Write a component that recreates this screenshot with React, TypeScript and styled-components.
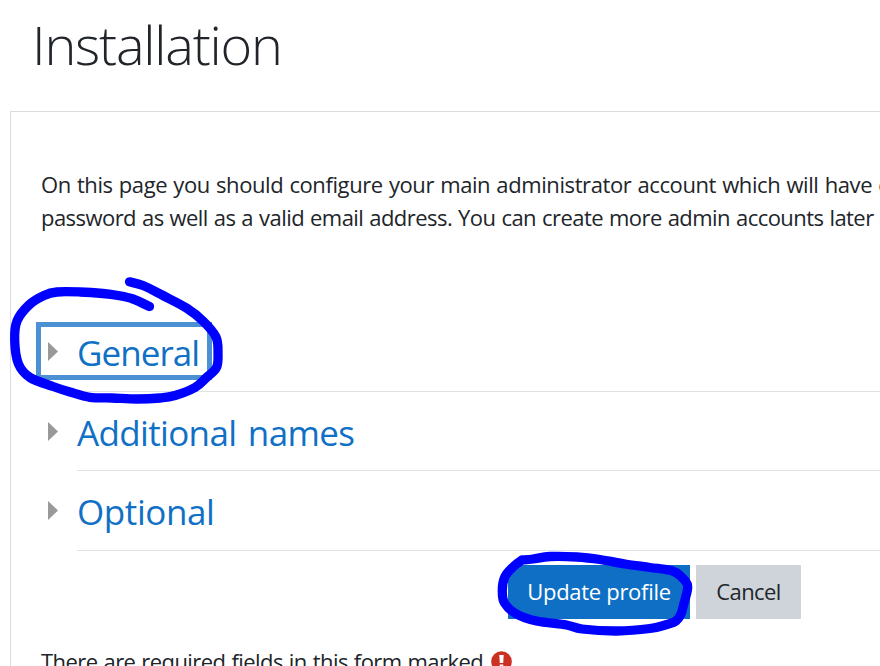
import React from 'react';
import styled, { createGlobalStyle } from 'styled-components';

const GlobalStyle = createGlobalStyle`
  * { box-sizing: border-box; }
  body {
    margin: 0;
    background: #fff;
    color: #212529;
    font-family: "Open Sans", "Noto Sans", sans-serif;
    overflow: hidden;
  }
`;

const Page = styled.main`
  position: relative;
  width: 880px;
  height: 666px;
  overflow: hidden;
`;

const Title = styled.h1`
  height: 111px;
  margin: 0;
  padding: 6px 0 0 32px;
  font-size: 54px;
  font-weight: 300;
  line-height: 76px;
  letter-spacing: -1.2px;
  white-space: nowrap;
`;

const Panel = styled.section`
  width: 900px;
  height: 600px;
  margin-left: 10px;
  padding: 56px 0 0 30px;
  border: 1px solid #dcdcdd;
`;

const Line = styled.div<{ $spacing: number }>`
  height: 33px;
  font-size: 22px;
  line-height: 33px;
  letter-spacing: ${({ $spacing }) => $spacing}px;
  word-spacing: 0.8px;
  white-space: nowrap;
`;

const Sections = styled.div`
  padding-top: 78px;
`;

const Section = styled.div<{ $height: number }>`
  display: flex;
  height: ${({ $height }) => $height}px;
  margin-left: 36px;
  border-bottom: 1px solid #dee2e6;
`;

const Toggle = styled.a<{ $focused?: boolean }>`
  display: flex;
  align-items: center;
  width: ${({ $focused }) => ($focused ? '176px' : 'auto')};
  height: 58px;
  margin: 10px 0 0 -41px;
  padding-top: 3px;
  border: 5px solid ${({ $focused }) => ($focused ? '#4a90d2' : 'transparent')};
  color: #1070c6;
  text-decoration: none;
`;

const Arrow = styled.svg`
  display: block;
  width: 10px;
  height: 19px;
  margin: -1px 19px 2px 7px;
`;

const Legend = styled.span<{ $spacing: number }>`
  font-size: 35px;
  font-weight: 380;
  line-height: 48px;
  letter-spacing: ${({ $spacing }) => $spacing}px;
  word-spacing: 3px;
  white-space: nowrap;
`;

const Actions = styled.div`
  display: flex;
  gap: 6px;
  height: 94px;
  padding: 14px 0 26px 467px;
`;

const Button = styled.button<{ $primary?: boolean }>`
  width: ${({ $primary }) => ($primary ? 182 : 105)}px;
  height: 54px;
  padding: 0 0 3px;
  border: 0;
  background: ${({ $primary }) => ($primary ? '#0f6fc5' : '#ced4da')};
  color: ${({ $primary }) => ($primary ? '#fff' : '#212529')};
  font: 400 22px "Open Sans", "Noto Sans", sans-serif;
  letter-spacing: ${({ $primary }) => ($primary ? -0.3 : -0.6)}px;
  white-space: nowrap;
`;

const Required = styled.div`
  display: flex;
  align-items: center;
  gap: 8px;
`;

const Ink = styled.svg`
  position: absolute;
  inset: 0;
  fill: none;
  stroke: #00f;
  stroke-width: 9.3;
  stroke-linecap: round;
  stroke-linejoin: round;
  pointer-events: none;
`;

const sections = [
  { name: 'General', height: 80, spacing: -0.95, focused: true },
  { name: 'Additional names', height: 79, spacing: -0.65, focused: false },
  { name: 'Optional', height: 80, spacing: -0.4, focused: false },
];

type Point = [number, number];

const generalStroke: Point[] = [
  [149.5, 306.5], [133, 299], [118, 295.5], [103, 293.5], [80, 292], [57, 292],
  [44, 295.5], [29, 305], [17, 321], [14.7, 341], [18.5, 364], [30, 377.5],
  [53, 386.5], [70, 392], [90, 397.3], [112, 398], [137, 399], [160, 398],
  [175, 395.5], [195, 387.5], [206, 378], [216.5, 367.5], [218, 353], [216, 337],
  [203, 321], [186.5, 308], [163, 295.5], [143, 285.5], [129.5, 281.8],
];

const updateStroke: Point[] = [
  [522, 560], [533, 559], [550, 556.5], [577, 557], [600, 559.5], [625, 564],
  [650, 567.5], [672, 570.8], [681.5, 577], [687.2, 584], [687.2, 591], [683.5, 605],
  [681, 614], [676, 621], [667, 624.5], [650, 628.5], [617, 631], [582, 629],
  [566.5, 625], [536.5, 621], [516.5, 614], [504.5, 603], [502.3, 590],
  [505, 576.5], [513, 567], [522, 560],
];

// Smooths a hand-drawn stroke with a Catmull-Rom spline.
function strokePath(points: Point[]) {
  let d = `M${points[0].join(' ')}`;
  for (let i = 0; i < points.length - 1; i += 1) {
    const before = points[Math.max(0, i - 1)];
    const from = points[i];
    const to = points[i + 1];
    const after = points[Math.min(points.length - 1, i + 2)];
    const c1 = from.map((v, k) => v + (to[k] - before[k]) / 6);
    const c2 = to.map((v, k) => v - (after[k] - from[k]) / 6);
    d += `C${c1.join(' ')} ${c2.join(' ')} ${to.join(' ')}`;
  }
  return d;
}

export default function App() {
  return (
    <>
      <GlobalStyle />
      <Page>
        <Title>Installation</Title>
        <Panel>
          <Line $spacing={-0.4}>On this page you should configure your main administrator account which will have c</Line>
          <Line $spacing={-0.55}>password as well as a valid email address. You can create more admin accounts later</Line>
          <Sections>
            {sections.map((s) => (
              <Section key={s.name} $height={s.height}>
                <Toggle $focused={s.focused}>
                  <Arrow viewBox="0 0 10 19"><path d="M0 0L10 9.5L0 19Z" fill="#999" /></Arrow>
                  <Legend $spacing={s.spacing}>{s.name}</Legend>
                </Toggle>
              </Section>
            ))}
          </Sections>
          <Actions>
            <Button $primary>Update profile</Button>
            <Button>Cancel</Button>
          </Actions>
          <Required>
            <Line $spacing={-0.56}>There are required fields in this form marked</Line>
            <svg width="21" height="21" viewBox="0 0 21 21">
              <circle cx="10.5" cy="10.5" r="10.3" fill="#ca3120" />
              <path d="M8.3 4h4.4l-.5 8H8.8Z M8.7 13.5h3.6v3.3H8.7Z" fill="#fff" />
            </svg>
          </Required>
        </Panel>
        <Ink width="880" height="666" viewBox="0 0 880 666">
          <path d={strokePath(generalStroke)} />
          <path d={strokePath(updateStroke)} />
        </Ink>
      </Page>
    </>
  );
}
